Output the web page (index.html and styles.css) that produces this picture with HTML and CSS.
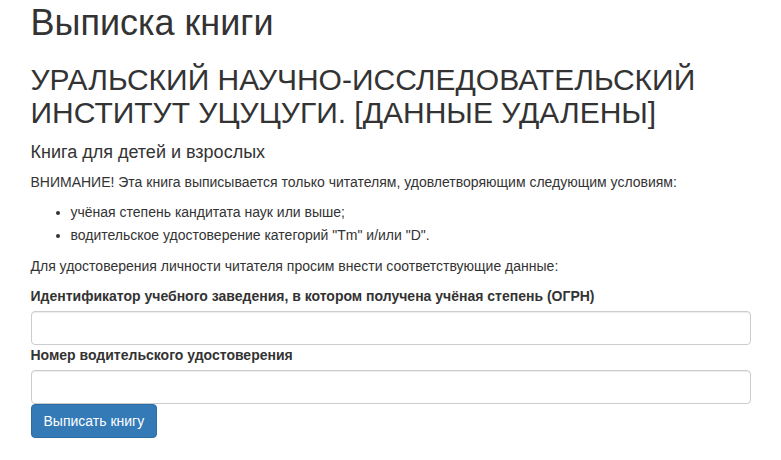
FILE: index.html
```html
<!DOCTYPE html>
<html lang="ru">
<head>
<meta charset="utf-8">
<title>Выписка книги</title>
<link rel="stylesheet" href="styles.css">
</head>
<body>
<div class="container">
  <h1 class="title">Выписка книги</h1>
  <h2 class="org">УРАЛЬСКИЙ НАУЧНО-ИССЛЕДОВАТЕЛЬСКИЙ ИНСТИТУТ УЦУЦУГИ. [ДАННЫЕ УДАЛЕНЫ]</h2>
  <h4 class="book">Книга для детей и взрослых</h4>
  <p class="text">ВНИМАНИЕ! Эта книга выписывается только читателям, удовлетворяющим следующим условиям:</p>
  <ul class="conditions">
    <li>учёная степень кандитата наук или выше;</li>
    <li>водительское удостоверение категорий "Tm" и/или "D".</li>
  </ul>
  <p class="text">Для удостоверения личности читателя просим внести соответствующие данные:</p>
  <form class="form">
    <label class="label" for="ogrn">Идентификатор учебного заведения, в котором получена учёная степень (ОГРН)</label>
    <input class="input" id="ogrn" type="text">
    <label class="label" for="license">Номер водительского удостоверения</label>
    <input class="input" id="license" type="text">
    <button class="btn" type="button">Выписать книгу</button>
  </form>
</div>
</body>
</html>
```

FILE: styles.css
```css
html, body {
  margin: 0;
  padding: 0;
  background: #fff;
}
body {
  font-family: "Liberation Sans", Arial, Helvetica, sans-serif;
  font-size: 14px;
  line-height: 20px;
  color: #333;
}
.container {
  width: 750px;
  box-sizing: border-box;
  margin: 0 auto;
  padding: 0 15px;
}
.title {
  font-size: 36px;
  font-weight: 400;
  line-height: 1.1;
  margin: 3px 0 10px;
}
.org {
  font-size: 30px;
  font-weight: 400;
  line-height: 1.1;
  margin: 20px 0 10px;
}
.book {
  font-size: 18px;
  font-weight: 400;
  line-height: 1.1;
  margin: 14px 0 10px;
}
.text {
  margin: 0 0 10px;
}
.conditions {
  margin: 0 0 11px;
  padding-left: 40px;
}
.conditions li {
  margin-bottom: 3px;
}
.form {
  margin: 0;
}
.label {
  display: inline-block;
  max-width: 100%;
  margin-bottom: 5px;
  font-weight: 700;
}
.input {
  display: block;
  width: 100%;
  height: 34px;
  box-sizing: border-box;
  padding: 6px 12px;
  font-family: inherit;
  font-size: 14px;
  line-height: 20px;
  color: #555;
  background: #fff;
  border: 1px solid #ccc;
  border-radius: 4px;
  box-shadow: inset 0 1px 1px rgba(0, 0, 0, .075);
  margin: 0;
}
.btn {
  display: inline-block;
  margin: 0;
  padding: 6px 12px;
  font-family: inherit;
  font-size: 14px;
  line-height: 20px;
  color: #fff;
  background: #337ab7;
  border: 1px solid #2e6da4;
  border-radius: 4px;
  cursor: pointer;
}
```
